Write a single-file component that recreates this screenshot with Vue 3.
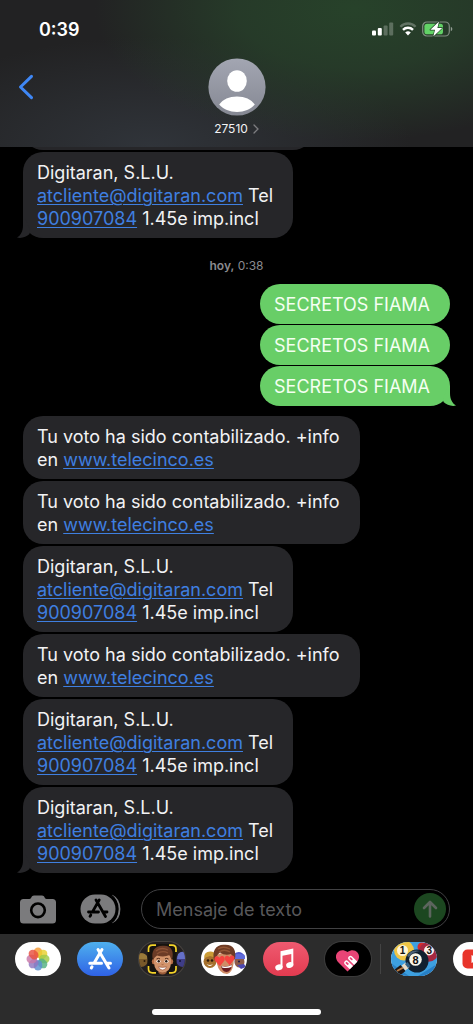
<script setup>
import { ref } from 'vue'

const draft = ref('')

const digitaran = [
  [{ text: 'Digitaran, S.L.U.' }],
  [{ text: 'atcliente@digitaran.com', href: 'mailto:atcliente@digitaran.com' }, { text: ' Tel' }],
  [{ text: '900907084', href: 'tel:900907084' }, { text: ' 1.45e imp.incl' }]
]
const voto = [
  [{ text: 'Tu voto ha sido contabilizado. +info' }],
  [{ text: 'en ' }, { text: 'www.telecinco.es', href: '#telecinco' }]
]
const secretos = [[{ text: 'SECRETOS FIAMA' }]]

const groups = [
  { side: 'received', messages: [digitaran] },
  { side: 'stamp' },
  { side: 'sent', messages: [secretos, secretos, secretos] },
  { side: 'received', messages: [voto, voto, digitaran, voto, digitaran, digitaran] }
]

const petals = ['#f59a35', '#e8d02f', '#9fc948', '#53b183', '#5c8fd0', '#8f76c0', '#c777a8', '#e8503f']
</script>

<template>
  <div class="phone">
    <header class="top">
      <div class="status">
        <time class="clock">0:39</time>
        <div class="indicators">
          <svg width="22" height="14" viewBox="0 0 22 14" aria-hidden="true">
            <rect x="0" y="8.5" width="4" height="5" rx="1" fill="#fff" />
            <rect x="5.8" y="6" width="4" height="7.5" rx="1" fill="#fff" />
            <rect x="11.6" y="3.5" width="4" height="10" rx="1" fill="#fff" opacity=".25" />
            <rect x="17.2" y="0.5" width="4" height="13" rx="1" fill="#fff" opacity=".25" />
          </svg>
          <svg width="18" height="14" viewBox="0 0 18 14" aria-hidden="true">
            <path d="M1.4 4.7A10.6 10.6 0 0 1 16.6 4.7" fill="none" stroke="#fff" stroke-width="2.3" opacity=".28" />
            <path d="M4 7.9A7 7 0 0 1 14 7.9" fill="none" stroke="#fff" stroke-width="2.4" />
            <path d="M9 13.4L6.2 10.5A4 4 0 0 1 11.8 10.5Z" fill="#fff" />
          </svg>
          <svg width="31" height="16" viewBox="0 0 31 16" aria-hidden="true">
            <rect x="0.7" y="1" width="26.6" height="14" rx="4.2" fill="none" stroke="#fff" stroke-opacity=".42" stroke-width="1.2" />
            <rect x="2.4" y="2.7" width="18.6" height="10.6" rx="2.6" fill="#62d166" />
            <path d="M28.8 5.8Q30.4 6.6 30.4 8T28.8 10.2Z" fill="#fff" opacity=".5" />
            <path d="M17 0.4L8.3 8.8H13L11.3 15.6L20.2 6.9H15.4Z" fill="#fff" stroke="#213b24" stroke-width="1.3" stroke-linejoin="round" paint-order="stroke" />
          </svg>
        </div>
      </div>
      <div class="nav">
        <button class="plain back" type="button" aria-label="Atrás">
          <svg width="16" height="26" viewBox="0 0 16 26"><path d="M13.5 2.3L2.5 13L13.5 23.7" fill="none" stroke="#3f87f5" stroke-width="3" stroke-linecap="round" stroke-linejoin="round" /></svg>
        </button>
        <button class="plain contact" type="button">
          <svg width="58" height="58" viewBox="0 0 58 58" aria-hidden="true">
            <defs>
              <linearGradient id="avatar" x1="0" y1="0" x2="0" y2="1">
                <stop offset="0" stop-color="#a3a6b2" /><stop offset="1" stop-color="#858893" />
              </linearGradient>
            </defs>
            <circle cx="29" cy="29" r="28.6" fill="url(#avatar)" />
            <ellipse cx="29" cy="23" rx="9.8" ry="10.8" fill="#fff" />
            <path d="M11.2 46.5C15 41.5 21 38.6 29 38.6S43 41.5 46.8 46.5C42.5 51.2 36.5 54 29 54S15.5 51.2 11.2 46.5Z" fill="#fff" />
          </svg>
          <span class="name">27510
            <svg width="6" height="10" viewBox="0 0 6 10" aria-hidden="true"><path d="M1 1L5 5L1 9" fill="none" stroke="#7d7d80" stroke-width="1.3" stroke-linecap="round" /></svg>
          </span>
        </button>
      </div>
    </header>

    <main class="thread">
      <div class="peek"></div>
      <template v-for="(group, g) in groups" :key="g">
        <p v-if="group.side === 'stamp'" class="stamp"><b>hoy,</b> 0:38</p>
        <section v-else class="group" :class="group.side">
          <p v-for="(message, m) in group.messages" :key="m" class="bubble">
            <template v-for="(line, l) in message" :key="l">
              <template v-for="(part, p) in line" :key="p"><a v-if="part.href" :href="part.href">{{ part.text }}</a><template v-else>{{ part.text }}</template></template><br v-if="l < message.length - 1" />
            </template>
            <svg v-if="m === group.messages.length - 1" class="tail" width="18" height="20" viewBox="0 0 18 20" aria-hidden="true">
              <path d="M6 0V7C6 13 4 17 0 19.6C5 20.6 9.500 18.800 12.500 16L13 12L8 0Z" fill="currentColor" />
            </svg>
          </p>
        </section>
      </template>
    </main>

    <form class="composer" @submit.prevent>
      <button class="plain" type="button" aria-label="Cámara">
        <svg width="36" height="29" viewBox="0 0 36 29">
          <path d="M3.5 4H9.5C11.5 4 11.2 0.5 14 0.5H22C24.8 0.5 24.5 4 26.5 4H32.5Q36 4 36 7.5V25Q36 28.5 32.5 28.5H3.5Q0 28.5 0 25V7.5Q0 4 3.5 4Z" fill="#7b7b7d" />
          <circle cx="18" cy="15.3" r="6.8" fill="none" stroke="#000" stroke-width="2.6" />
        </svg>
      </button>
      <button class="plain" type="button" aria-label="Apps">
        <svg width="41" height="30" viewBox="0 0 41 30">
          <rect x="0.5" y="0.5" width="35" height="29" rx="14.5" fill="#7b7b7d" />
          <path d="M32 1.500C37 4 39.500 9 39.500 15S37 26 32 28.500" fill="none" stroke="#7b7b7d" stroke-width="1.8" />
          <path d="M31 1C35.500 4 37.500 9.500 37.500 15S35.500 26 31 29" fill="none" stroke="#000" stroke-width="1.5" />
          <g fill="none" stroke="#000" stroke-width="2.8" stroke-linecap="round">
            <path d="M19.2 6L12.6 17.6M16 6L25.5 22.5M8.5 18H18.5M23.5 18H27M10.8 21L10 22.4" />
          </g>
        </svg>
      </button>
      <div class="field">
        <input v-model="draft" type="text" placeholder="Mensaje de texto" aria-label="Mensaje de texto" />
        <button class="plain send" type="submit" aria-label="Enviar">
          <svg width="18" height="20" viewBox="0 0 18 20"><path d="M9 17.5V3M3 9L9 3L15 9" fill="none" stroke="#5d655e" stroke-width="2.6" stroke-linecap="round" stroke-linejoin="round" /></svg>
        </button>
      </div>
    </form>

    <footer class="drawer">
      <nav class="strip" aria-label="Apps de mensajes">
        <button class="pill" type="button" aria-label="Fotos">
          <svg width="46" height="34" viewBox="0 0 46 34">
            <g v-for="(color, i) in petals" :key="color" :transform="`rotate(${i * 45} 23 17)`">
              <rect x="18.8" y="5.5" width="8.4" height="10.5" rx="4.2" :fill="color" opacity=".82" />
            </g>
            <circle cx="23" cy="17" r="1.2" fill="#fff" />
          </svg>
        </button>
        <button class="pill store" type="button" aria-label="App Store">
          <svg width="46" height="34" viewBox="0 0 46 34">
            <path d="M25 7.5L17.3 20.8M21 7.5L32 26M12.8 21.3H24.5M30 21.3H33.5M15 24.7L14.3 26" fill="none" stroke="#fff" stroke-width="3" stroke-linecap="round" />
          </svg>
        </button>
        <button class="pill memoji" type="button" aria-label="Memoji">
          <svg width="46" height="34" viewBox="0 0 46 34">
            <circle cx="2" cy="18" r="7" fill="#79592a" /><path d="M0 12Q5 10 8 14V17H0Z" fill="#9a7a3a" /><circle cx="5.5" cy="19" r="1" fill="#2a1a0b" />
            <circle cx="44" cy="18" r="7" fill="#3f3d87" /><path d="M39 12Q43 8 46 11V17H38Z" fill="#6570c8" /><circle cx="41" cy="19" r="1" fill="#151334" />
            <rect x="8.5" y="2" width="29" height="30" rx="7" fill="#17130f" />
            <path d="M19.5 26H27.5V31Q23.5 34 19.5 31Z" fill="#9a5c3a" />
            <ellipse cx="14.8" cy="19.500" rx="2" ry="2.700" fill="#b87048" /><ellipse cx="32.2" cy="19.500" rx="2" ry="2.700" fill="#b87048" />
            <path d="M15 14Q23.500 8 32 14V21Q31.500 30 23.500 30.500Q15.500 30 15 21Z" fill="#d2946c" />
            <path d="M14 18C11.500 9 16 3.500 24 3.700C32 3 35.500 9 33 18Q31.500 16 30.500 13Q25 15.500 18 13.500Q15.500 15 14 18Z" fill="#6b3b26" />
            <path d="M17 9Q22 4.500 29 8M18 12Q23 8 29 11" fill="none" stroke="#8c5337" stroke-width="1.300" />
            <path d="M17.500 17Q19.500 15.800 21 16.800M26 16.800Q27.500 15.800 29.500 17" stroke="#4d2a1a" fill="none" />
            <ellipse cx="19.500" cy="19.300" rx="2" ry="1.500" fill="#fff" /><ellipse cx="27.500" cy="19.300" rx="2" ry="1.500" fill="#fff" />
            <circle cx="19.700" cy="19.300" r="1.200" fill="#27170f" /><circle cx="27.300" cy="19.300" r="1.200" fill="#27170f" />
            <path d="M22.600 22.300Q23.500 23 24.500 22.300" fill="none" stroke="#a7613f" />
            <path d="M19.500 24.800Q23.500 26 27.500 24.800Q26.500 28 23.500 28T19.500 24.800Z" fill="#fff" stroke="#8e4a34" stroke-width=".6" />
            <path d="M9.5 10V7Q9.5 3.200 13.500 3.200H17M30 3.200H33Q37 3.200 37 7V10M37 24V27Q37 30.800 33 30.800H30M17 30.800H13.500Q9.500 30.800 9.500 27V24" fill="none" stroke="#f4d429" stroke-width="1.700" />
          </svg>
        </button>
        <button class="pill" type="button" aria-label="Stickers de Memoji">
          <svg width="46" height="34" viewBox="0 0 46 34">
            <circle cx="9" cy="19.5" r="6.5" fill="#a5702c" /><path d="M3 16Q3 9 10 9.500Q15 10 15.500 16L9 14Z" fill="#cb9c36" /><circle cx="7" cy="18.500" r="1.300" fill="#2d190b" /><circle cx="11" cy="18.500" r="1.300" fill="#2d190b" /><path d="M5.500 22Q9 24 12 22Q9 26 5.500 22Z" fill="#fff" />
            <path d="M33 12Q39 7 44 14L42 22H34Z" fill="#4e55c9" /><ellipse cx="38.5" cy="20" rx="5" ry="5.5" fill="#8d5a48" /><path d="M33 13Q39 10 44 14V17H33Z" fill="#606bda" /><path d="M36 23L43 22L45 25L40 27Z" fill="#4c48b0" /><circle cx="38" cy="19.5" r="1" fill="#1c1644" />
            <path d="M15.500 13Q24 8 33 13L32.500 22Q31 31 26 32Q18 31.500 16 22Z" fill="#cf8c66" />
            <path d="M13.300 19C10.500 9 15 2.500 23 2.800C32 2 36 8 33.800 18L30 12Q24 14 19 10.500Q15.500 13 13.300 19Z" fill="#6d3b25" />
            <path d="M17 7Q22 3.500 29 7M18 10Q23 6.500 29 10" fill="none" stroke="#935636" stroke-width="1.300" />
            <path d="M20 24Q26 25.500 31 22.500Q30 30 25.500 30Q21 29.500 20 24Z" fill="#681d22" /><path d="M20.500 24.300Q26 25.500 30.700 23V24.700Q26 27 21 25.500Z" fill="#fff" />
            <path d="M19 24.300L14 18.800C11.800 15 16.300 12.300 18.600 15.800C20 12.300 25 14.300 23.500 18.500Z" fill="#f4433f" />
            <path d="M28.800 23.200L24.300 18.300C22.300 14.300 26.500 12 28.500 15.300C30 11.800 35 13.500 33 17.800Z" fill="#f4433f" />
          </svg>
        </button>
        <button class="pill music" type="button" aria-label="Música">
          <svg width="46" height="34" viewBox="0 0 46 34">
            <path d="M17.500 9.200L30.300 6.500V22.500H28.300V12L19.500 13.800V25H17.500Z" fill="#fff" />
            <ellipse cx="16" cy="25.300" rx="3.800" ry="2.900" fill="#fff" transform="rotate(-18 16 25.300)" /><ellipse cx="26.800" cy="23" rx="3.700" ry="2.900" fill="#fff" transform="rotate(-18 26.800 23)" />
          </svg>
        </button>
        <button class="pill touch" type="button" aria-label="Digital Touch">
          <svg width="46" height="34" viewBox="0 0 46 34">
            <defs><clipPath id="heart"><path d="M22.5 29.5L13 20C7.500 13.500 14 4.500 22.500 10C31 4.500 37.500 13.500 32 20Z" /></clipPath></defs>
            <g clip-path="url(#heart)">
              <rect width="46" height="34" fill="#e94476" />
              <path d="M21.500 20.800L33 32M25.500 16.200L38 28.500" stroke="#fff" stroke-width="4.6" stroke-linecap="round" />
              <path d="M21.500 20.800L22.800 22M25.500 16.200L26.800 17.400" stroke="#e94476" stroke-width="1.8" stroke-linecap="round" />
            </g>
          </svg>
        </button>
        <span class="rule"></span>
        <button class="pill" type="button" aria-label="8 Ball Pool">
          <svg width="46" height="34" viewBox="0 0 46 34">
            <rect width="46" height="34" fill="#3d9fdf" />
            <path d="M0 21L18 34H0Z" fill="#2b82c5" /><path d="M27 34L46 22V34Z" fill="#277fc5" />
            <circle cx="13" cy="8.5" r="10" fill="#f0c545" /><circle cx="31" cy="5" r="4.5" fill="#d52b2d" /><circle cx="37.5" cy="10" r="9.8" fill="#a52841" />
            <circle cx="11.5" cy="8.5" r="5.5" fill="#fff5d8" /><circle cx="38" cy="8.5" r="5" fill="#f9f0ec" />
            <circle cx="26" cy="19" r="11.5" fill="#11202f" /><path d="M16 14Q20 7 29 9Q21 10 18 15Z" fill="#4a6178" /><circle cx="24.5" cy="17.5" r="6.3" fill="#f7f5e9" />
            <path d="M2 34L12 26" stroke="#20140e" stroke-width="8" /><path d="M6 29L15 24" stroke="#b77b45" stroke-width="2" /><path d="M12.5 26L16.500 23" stroke="#e8dbc6" stroke-width="6" /><path d="M15.500 24L18 22" stroke="#315f83" stroke-width="5" />
            <g class="digits"><text x="11.5" y="12" font-size="10">1</text><text x="38.3" y="12" font-size="10">3</text><text x="24.5" y="21.500" font-size="11">8</text></g>
          </svg>
        </button>
        <button class="pill" type="button" aria-label="YouTube">
          <svg width="46" height="34" viewBox="0 0 46 34"><rect x="9.5" y="7.5" width="27" height="19" rx="5" fill="#e8352b" /><path d="M18.500 13L27.500 17L18.500 21Z" fill="#fff" /></svg>
        </button>
      </nav>
      <div class="home"></div>
    </footer>
  </div>
</template>

<style>
body {
  background: #000;
}
</style>

<style scoped>
.phone {
  display: flex;
  flex-direction: column;
  min-height: 100vh;
  overflow: hidden;
  background: #000;
  color: #f2f2f4;
  font-family: Inter, "Liberation Sans", sans-serif;
}
.plain {
  display: flex;
  flex: none;
  align-items: center;
  justify-content: center;
  padding: 0;
  border: 0;
  background: none;
  color: inherit;
  font: inherit;
}
.top {
  position: relative;
  z-index: 1;
  box-sizing: border-box;
  height: 147px;
  background:
    radial-gradient(ellipse 55% 90% at 75% 6%, #27422a 0%, #27402acc 45%, transparent 100%),
    radial-gradient(ellipse 55% 75% at 32% 100%, #30343a 0%, transparent 100%),
    #222223;
}
.status {
  display: flex;
  align-items: center;
  justify-content: space-between;
  height: 58px;
  padding: 0 20px 0 39px;
}
.clock {
  color: #fff;
  font-size: 18px;
  font-weight: 600;
}
.indicators {
  display: flex;
  align-items: center;
  gap: 5px;
}
.nav {
  display: grid;
  grid-template-columns: 1fr auto 1fr;
  align-items: start;
  padding: 0 18px;
}
.back {
  justify-self: start;
  height: 58px;
}
.contact {
  flex-direction: column;
  gap: 5px;
}
.name {
  display: flex;
  align-items: center;
  gap: 5px;
  font-size: 12px;
  line-height: 16px;
}
.thread {
  display: flex;
  flex: 1;
  flex-direction: column;
  padding: 0 23px;
  font-size: 18px;
  line-height: 23px;
}
.peek {
  width: 290px;
  height: 40px;
  margin: -37px 0 2px;
  border-radius: 20px;
  background: #262629;
}
.group {
  display: flex;
  flex-direction: column;
  align-items: flex-start;
  gap: 2px;
}
.sent {
  align-items: flex-end;
  gap: 1px;
  margin-bottom: 10px;
}
.bubble {
  position: relative;
  margin: 0;
  padding: 9px 20px 8px 14px;
  border-radius: 20px;
  background: #262629;
  white-space: nowrap;
}
.sent .bubble {
  background: #68ce67;
  color: #f4fff2;
}
.bubble a {
  color: #3f7fe0;
  text-decoration-thickness: 1px;
  text-underline-offset: 2px;
}
.tail {
  position: absolute;
  bottom: 0;
  left: -6px;
  color: #262629;
}
.sent .tail {
  right: -6px;
  left: auto;
  color: #68ce67;
  transform: scaleX(-1);
}
.stamp {
  margin: 20px 0 10px;
  color: #8a8a8e;
  font-size: 12px;
  line-height: 16px;
  text-align: center;
}
.stamp b {
  font-weight: 600;
}
.composer {
  display: flex;
  align-items: center;
  gap: 24px;
  padding: 8px 23px 5px 20px;
}
.field {
  display: flex;
  flex: 1;
  align-items: center;
  box-sizing: border-box;
  min-width: 0;
  height: 40px;
  margin-left: -4px;
  padding: 0 3px 0 14px;
  border: 1px solid #414143;
  border-radius: 20px;
}
.field input {
  flex: 1;
  min-width: 0;
  padding: 0;
  border: 0;
  outline: 0;
  background: none;
  color: #fff;
  font: inherit;
  font-size: 18px;
}
.field input::placeholder {
  color: #58585b;
  opacity: 1;
}
.send {
  width: 32px;
  height: 32px;
  border-radius: 50%;
  background: #1c4720;
}
.drawer {
  display: flex;
  flex-direction: column;
  align-items: center;
  background: #2c2c2c;
}
.strip {
  display: flex;
  align-items: center;
  gap: 16px;
  align-self: stretch;
  box-sizing: border-box;
  padding: 8px 0 8px 15px;
  overflow: hidden;
}
.pill {
  flex: none;
  box-sizing: border-box;
  width: 46px;
  height: 34px;
  padding: 0;
  border: 0;
  border-radius: 17px;
  overflow: hidden;
  background: #fff;
}
.pill svg {
  display: block;
}
.store {
  background: linear-gradient(#4eb0ee, #2f62e6);
}
.memoji {
  background: #231f20;
  box-shadow: 0 0 0 1px #47433f;
}
.music {
  background: linear-gradient(#ef5a70, #e23b50);
}
.touch {
  background: #000;
  box-shadow: 0 0 0 1px #3b3b3b;
}
.rule {
  flex: none;
  width: 1px;
  height: 30px;
  margin: 0 -6px 0 -7px;
  background: #434343;
}
.digits {
  fill: #111;
  font-family: "Liberation Sans", sans-serif;
  font-weight: 700;
  text-anchor: middle;
}
.home {
  width: 169px;
  height: 6px;
  margin: 25px 0 9px;
  border-radius: 3px;
  background: #fff;
}
</style>
